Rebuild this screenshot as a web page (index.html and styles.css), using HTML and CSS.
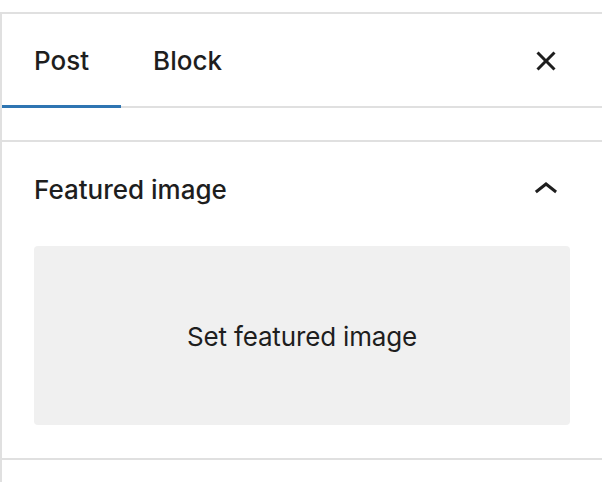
FILE: index.html
```html
<!DOCTYPE html>
<html lang="en">
<head>
<meta charset="utf-8">
<title>Post settings</title>
<link rel="stylesheet" href="styles.css">
</head>
<body>
<aside class="sidebar">
  <div class="tabs">
    <button class="tab is-active" type="button">Post</button>
    <button class="tab" type="button">Block</button>
    <button class="icon-btn close" type="button" aria-label="Close settings">
      <svg viewBox="0 0 24 24" width="48" height="48" aria-hidden="true">
        <path d="M12 13.06l3.712 3.713 1.061-1.06L13.061 12l3.712-3.712-1.06-1.06L12 10.938 8.288 7.227l-1.061 1.06L10.939 12l-3.712 3.712 1.06 1.061L12 13.061z"/>
      </svg>
    </button>
  </div>
  <div class="panel-spacer"></div>
  <section class="panel">
    <div class="panel-title">
      <h2>Featured image</h2>
      <button class="icon-btn" type="button" aria-label="Collapse">
        <svg viewBox="0 0 24 24" width="48" height="48" aria-hidden="true">
          <path d="M6.5 12.4L12 8l5.5 4.4-.9 1.2L12 10l-4.6 3.6-1-1.2z"/>
        </svg>
      </button>
    </div>
    <button class="featured-image" type="button">Set featured image</button>
  </section>
</aside>
</body>
</html>
```

FILE: styles.css
```css
* {
  box-sizing: border-box;
}

html, body {
  margin: 0;
  background: #fff;
}

body {
  font-family: Inter, "Noto Sans", "Liberation Sans", sans-serif;
  color: #1e1e1e;
  height: 482px;
  overflow: hidden;
}

button {
  font: inherit;
  color: inherit;
  background: none;
  border: 0;
  margin: 0;
  cursor: pointer;
}

.sidebar {
  margin-top: 12px;
  border-top: 2px solid #e0e0e0;
  border-left: 2px solid #e0e0e0;
  min-height: 470px;
}

/* tab header */
.tabs {
  display: flex;
  align-items: stretch;
  height: 94px;
  padding-right: 32px;
  box-shadow: inset 0 -2px 0 #e0e0e0;
}

.tab {
  padding: 0 32px;
  font-size: 26px;
  font-weight: 500;
  line-height: 1;
}

.tab.is-active {
  box-shadow: inset 0 -3px 0 #2e75b2;
}

.icon-btn {
  display: flex;
  align-items: center;
  justify-content: center;
  padding: 0;
  width: 48px;
  height: 48px;
}

.icon-btn svg {
  fill: #1e1e1e;
  display: block;
}

.close {
  margin-left: auto;
  align-self: center;
}

.panel-spacer {
  height: 34px;
  border-bottom: 2px solid #e0e0e0;
}

/* featured image panel */
.panel {
  padding: 0 32px 33px;
  border-bottom: 2px solid #e0e0e0;
}

.panel-title {
  display: flex;
  align-items: center;
  justify-content: space-between;
  height: 96px;
}

.panel-title h2 {
  margin: 0;
  font-size: 26px;
  font-weight: 500;
  line-height: 1;
}

.featured-image {
  display: flex;
  align-items: center;
  justify-content: center;
  width: 100%;
  height: 179px;
  margin-top: 8px;
  padding-top: 2px;
  background: #f0f0f0;
  border-radius: 4px;
  font-size: 26px;
  font-weight: 400;
  letter-spacing: -0.15px;
}
```
